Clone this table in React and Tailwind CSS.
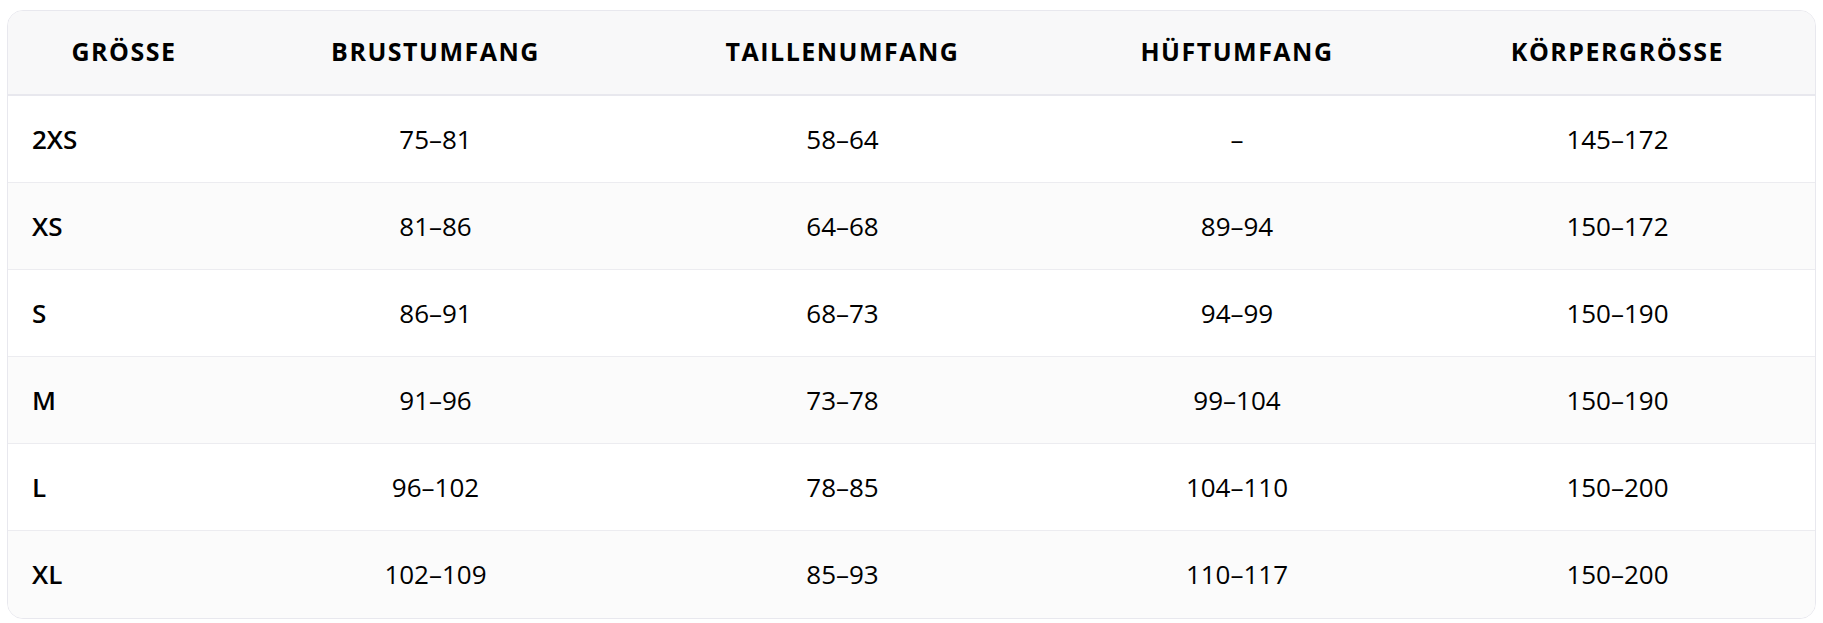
import React from "react";

const rows = [
  ["2XS", "75–81", "58–64", "–", "145–172"],
  ["XS", "81–86", "64–68", "89–94", "150–172"],
  ["S", "86–91", "68–73", "94–99", "150–190"],
  ["M", "91–96", "73–78", "99–104", "150–190"],
  ["L", "96–102", "78–85", "104–110", "150–200"],
  ["XL", "102–109", "85–93", "110–117", "150–200"],
];

const headers = ["GRÖSSE", "BRUSTUMFANG", "TAILLENUMFANG", "HÜFTUMFANG", "KÖRPERGRÖSSE"];

export default function App() {
  return (
    <div
      className="w-[1823px] h-[623px] bg-white pt-[10px] px-[7px]"
      style={{ fontFamily: '"Open Sans", "Noto Sans", sans-serif' }}
    >
      <div className="w-[1809px] border border-[#e8e8ee] rounded-2xl overflow-hidden text-black">
        <div className="grid grid-cols-[232px_391px_423px_366px_1fr] h-[85px] bg-[#f8f8f9] border-b-2 border-[#e8e8ee]">
          {headers.map((h) => (
            <div
              key={h}
              className="flex items-center justify-center text-[25px] font-bold tracking-[1.5px] pb-[2px]"
            >
              {h}
            </div>
          ))}
        </div>
        {rows.map((r, i) => (
          <div
            key={r[0]}
            className={
              "grid grid-cols-[232px_391px_423px_366px_1fr] h-[87px] " +
              (i % 2 === 1 ? "bg-[#fbfbfb] " : "bg-white ") +
              (i < rows.length - 1 ? "border-b border-[#ececf0]" : "")
            }
          >
            <div className="flex items-center pl-[24px] text-[26px] font-semibold">{r[0]}</div>
            {r.slice(1).map((c, j) => (
              <div key={j} className="flex items-center justify-center text-[26px]">
                {c}
              </div>
            ))}
          </div>
        ))}
      </div>
    </div>
  );
}
